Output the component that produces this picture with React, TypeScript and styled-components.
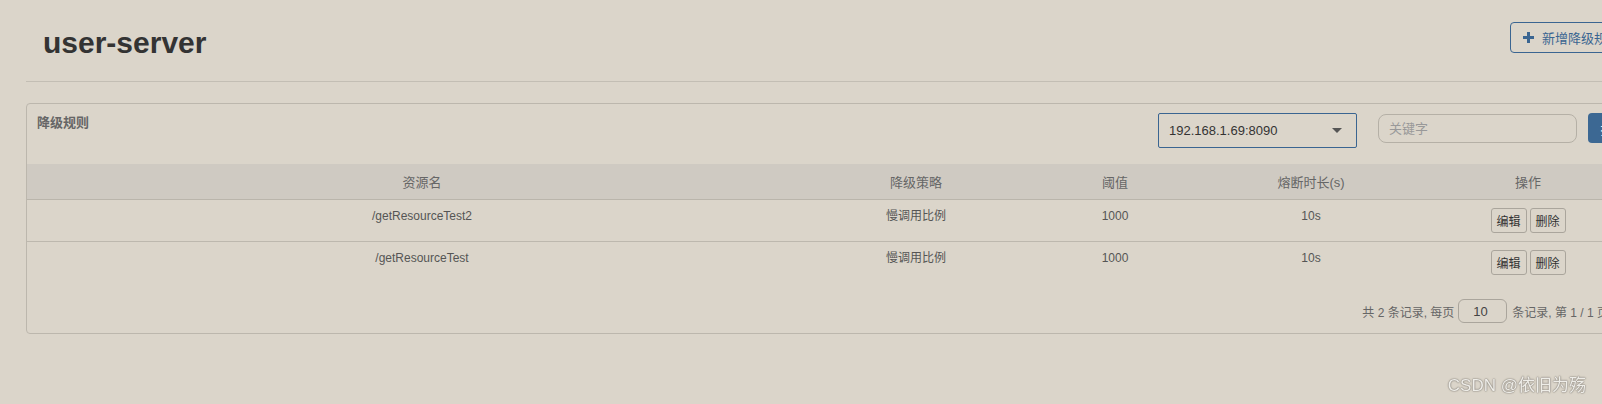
import React from "react";
import styled, { createGlobalStyle } from "styled-components";

const GlobalStyle = createGlobalStyle`
  html, body {
    margin: 0;
    padding: 0;
    background: #dbd5ca;
    overflow: hidden;
  }
  body {
    font-family: "Liberation Sans", Arial, "Noto Sans CJK SC", sans-serif;
    font-size: 12px;
    color: #555;
  }
`;

const Page = styled.div`
  width: 1624px;
  padding: 0 26px;
`;

const Header = styled.div`
  height: 81px;
  display: flex;
  justify-content: space-between;
  align-items: flex-start;
  border-bottom: 1px solid #c3beb4;
`;

const Title = styled.h1`
  margin: 0;
  padding: 26px 0 0 17px;
  font-size: 30px;
  line-height: 34px;
  font-weight: 700;
  color: #333;
`;

const OutlineButton = styled.button`
  margin-top: 22px;
  width: 140px;
  height: 31px;
  padding: 0 0 0 12px;
  display: flex;
  align-items: center;
  gap: 8px;
  font-family: inherit;
  font-size: 13px;
  color: #3a6591;
  background: transparent;
  border: 1px solid #3a6591;
  border-radius: 4px;
`;

const Panel = styled.section`
  margin-top: 21px;
  border: 1px solid #bcb7ad;
  border-radius: 4px;
`;

const PanelHead = styled.div`
  height: 60px;
  box-sizing: border-box;
  padding: 9px 10px 0 10px;
  display: flex;
  align-items: flex-start;
`;

const PanelTitle = styled.h3`
  margin: 0;
  font-size: 13px;
  line-height: 20px;
  font-weight: 700;
  color: #666;
`;

const Toolbar = styled.div`
  margin-left: auto;
  display: flex;
  align-items: flex-start;
`;

const Select = styled.div`
  width: 199px;
  height: 35px;
  box-sizing: border-box;
  padding: 0 10px;
  display: flex;
  align-items: center;
  justify-content: space-between;
  border: 1px solid #3a6591;
  border-radius: 2px;
  font-size: 13px;
  color: #333;
`;

const Caret = styled.span`
  width: 0;
  height: 0;
  margin-right: 4px;
  border-left: 5px solid transparent;
  border-right: 5px solid transparent;
  border-top: 5px solid #555;
`;

const SearchInput = styled.input`
  margin: 1px 0 0 21px;
  width: 199px;
  height: 29px;
  box-sizing: border-box;
  padding: 0 10px;
  font-family: inherit;
  font-size: 13px;
  background: transparent;
  border: 1px solid #b5b0a6;
  border-radius: 8px;
  outline: none;
  &::placeholder {
    color: #999;
  }
`;

const SolidButton = styled.button`
  margin-left: 11px;
  width: 51px;
  height: 30px;
  font-family: inherit;
  font-size: 13px;
  color: #fff;
  background: #3c6893;
  border: none;
  border-radius: 4px;
`;

const Table = styled.table`
  width: 100%;
  border-collapse: collapse;
  table-layout: fixed;
`;

const Th = styled.th<{ $w?: number }>`
  width: ${(p) => (p.$w ? `${p.$w}px` : "auto")};
  height: 35px;
  padding: 0;
  background: #cfcac2;
  border-bottom: 1px solid #bab5ab;
  font-size: 13px;
  font-weight: 400;
  color: #666;
  text-align: center;
`;

const Tr = styled.tr`
  &:not(:last-child) td {
    border-bottom: 1px solid #bdb8ae;
  }
`;

const Td = styled.td`
  height: 25px;
  padding: 8px;
  vertical-align: top;
  text-align: center;
  font-size: 12px;
  line-height: 17px;
  color: #555;
`;

const Actions = styled.div`
  display: flex;
  justify-content: center;
  gap: 3px;
`;

const SmallButton = styled.button`
  width: 36px;
  height: 25px;
  padding: 0;
  font-family: inherit;
  font-size: 12px;
  color: #333;
  background: transparent;
  border: 1px solid #aaa59c;
  border-radius: 3px;
`;

const Pager = styled.div`
  padding: 16px 40px 10px 0;
  display: flex;
  justify-content: flex-end;
  align-items: center;
  font-size: 12px;
  color: #666;
`;

const PageSize = styled.div`
  margin: 0 5px 0 4px;
  width: 49px;
  height: 24px;
  box-sizing: border-box;
  padding-left: 14px;
  display: flex;
  align-items: center;
  border: 1px solid #aaa59c;
  border-radius: 6px;
  font-size: 13px;
  color: #444;
`;

const Watermark = styled.div`
  position: fixed;
  right: 16px;
  bottom: 8px;
  font-size: 17px;
  color: rgba(250, 248, 244, 0.9);
  text-shadow: 0 0 1px #8a857d, 0 0 1px #8a857d, 0 0 2px #8a857d;
`;

const rules = [
  { resource: "/getResourceTest2", grade: "慢调用比例", count: 1000, timeWindow: 10 },
  { resource: "/getResourceTest", grade: "慢调用比例", count: 1000, timeWindow: 10 },
];

const PlusIcon = () => (
  <svg width="11" height="11" viewBox="0 0 11 11">
    <path d="M5.5 0v11M0 5.5h11" stroke="#3a6591" strokeWidth="3" />
  </svg>
);

export default function App() {
  return (
    <>
      <GlobalStyle />
      <Page>
        <Header>
          <Title>user-server</Title>
          <OutlineButton>
            <PlusIcon />
            新增降级规则
          </OutlineButton>
        </Header>
        <Panel>
          <PanelHead>
            <PanelTitle>降级规则</PanelTitle>
            <Toolbar>
              <Select>
                <span>192.168.1.69:8090</span>
                <Caret />
              </Select>
              <SearchInput placeholder="关键字" />
              <SolidButton>搜索</SolidButton>
            </Toolbar>
          </PanelHead>
          <Table>
            <thead>
              <tr>
                <Th $w={790}>资源名</Th>
                <Th $w={198}>降级策略</Th>
                <Th $w={200}>阈值</Th>
                <Th $w={192}>熔断时长(s)</Th>
                <Th>操作</Th>
              </tr>
            </thead>
            <tbody>
              {rules.map((r) => (
                <Tr key={r.resource}>
                  <Td>{r.resource}</Td>
                  <Td>{r.grade}</Td>
                  <Td>{r.count}</Td>
                  <Td>{r.timeWindow}s</Td>
                  <Td>
                    <Actions>
                      <SmallButton>编辑</SmallButton>
                      <SmallButton>删除</SmallButton>
                    </Actions>
                  </Td>
                </Tr>
              ))}
            </tbody>
          </Table>
          <Pager>
            共 2 条记录, 每页
            <PageSize>10</PageSize>
            条记录, 第 1 / 1 页
          </Pager>
        </Panel>
      </Page>
      <Watermark>CSDN @依旧为殇</Watermark>
    </>
  );
}
